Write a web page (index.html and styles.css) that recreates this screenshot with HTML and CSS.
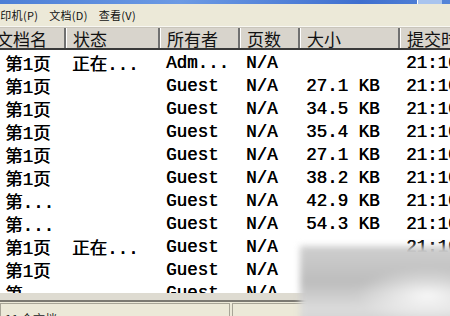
FILE: index.html
```html
<!DOCTYPE html>
<html>
<head>
<meta charset="utf-8">
<link rel="stylesheet" href="styles.css">
</head>
<body>
<div class="window">
  <div class="titlebar"><div class="tb-btns"></div></div>
  <div class="menubar">
    <span class="menu first">打印机(P)</span>
    <span class="menu">文档(D)</span>
    <span class="menu">查看(V)</span>
  </div>
  <div class="list">
    <div class="row header">
      <div class="hcell first">文档名</div>
      <div class="hcell">状态</div>
      <div class="hcell">所有者</div>
      <div class="hcell">页数</div>
      <div class="hcell">大小</div>
      <div class="hcell last">提交时间</div>
    </div>
    <div class="body">
      <div class="row"><div>第1页</div><div>正在...</div><div>Adm...</div><div>N/A</div><div></div><div>21:10</div></div>
      <div class="row"><div>第1页</div><div></div><div>Guest</div><div>N/A</div><div>27.1 KB</div><div>21:10</div></div>
      <div class="row"><div>第1页</div><div></div><div>Guest</div><div>N/A</div><div>34.5 KB</div><div>21:10</div></div>
      <div class="row"><div>第1页</div><div></div><div>Guest</div><div>N/A</div><div>35.4 KB</div><div>21:10</div></div>
      <div class="row"><div>第1页</div><div></div><div>Guest</div><div>N/A</div><div>27.1 KB</div><div>21:10</div></div>
      <div class="row"><div>第1页</div><div></div><div>Guest</div><div>N/A</div><div>38.2 KB</div><div>21:10</div></div>
      <div class="row"><div>第...</div><div></div><div>Guest</div><div>N/A</div><div>42.9 KB</div><div>21:10</div></div>
      <div class="row"><div>第...</div><div></div><div>Guest</div><div>N/A</div><div>54.3 KB</div><div>21:10</div></div>
      <div class="row"><div>第1页</div><div>正在...</div><div>Guest</div><div>N/A</div><div></div><div>21:10</div></div>
      <div class="row"><div>第1页</div><div></div><div>Guest</div><div>N/A</div><div></div><div>21:10</div></div>
      <div class="row"><div>第...</div><div></div><div>Guest</div><div>N/A</div><div></div><div>21:10</div></div>
    </div>
  </div>
  <div class="bottomband"></div>
  <div class="status">
    <div class="pane p1">11 个文档</div>
    <div class="pane p2"></div>
  </div>
  <div class="blur"></div>
</div>
</body>
</html>
```

FILE: styles.css
```css
html, body {
  margin: 0;
  padding: 0;
  background: #ffffff;
}
.window {
  position: relative;
  width: 450px;
  height: 316px;
  overflow: hidden;
  display: flex;
  flex-direction: column;
  background: #ece9d8;
  font-family: "Noto Sans CJK SC", sans-serif;
}
.titlebar {
  height: 4px;
  flex: none;
  background: linear-gradient(to right, #4d7fd6, #6c9ae4 40%, #3f6fcf 80%, #5585d8);
  position: relative;
}
.tb-btns {
  position: absolute;
  right: 8px;
  top: 0;
  width: 24px;
  height: 4px;
  background: #a9c4ee;
  border-left: 1px solid #ffffff;
}
.menubar {
  height: 22px;
  flex: none;
  display: flex;
  align-items: center;
  background: #ece9d8;
  border-bottom: 1px solid #f8f7f2;
  font-size: 11px;
  color: #111;
}
.menu {
  padding: 0 6px 0 5px;
  letter-spacing: 0.3px;
}
.menu.first {
  margin-left: -16px;
}
.list {
  flex: none;
  height: 266px;
  display: flex;
  flex-direction: column;
  background: #ffffff;
}
.row {
  display: grid;
  grid-template-columns: 66px 94px 80px 60px 100px 120px;
  height: 23px;
  align-items: center;
  font-family: "Liberation Mono", "Noto Sans CJK SC", monospace;
  font-size: 17.5px;
  color: #000;
  white-space: nowrap;
}
.row > div {
  padding-left: 6px;
  overflow: hidden;
}
.row > div:first-child {
  padding-left: 5px;
}
.header {
  height: 20px;
  flex: none;
  background: #d8d4cc;
  border-top: 1px solid #c9c5bb;
  border-bottom: 2px solid #3a3a3a;
  font-family: "Noto Sans CJK SC", sans-serif;
  font-size: 17px;
  align-items: stretch;
}
.hcell {
  display: flex;
  align-items: center;
  border-right: 2px solid #707070;
  box-shadow: inset 1px 0 #ffffff;
  line-height: 1;
  color: #111;
}
.row > .hcell.first {
  padding-left: 0;
  margin-left: -4px;
  box-shadow: none;
}
.row > .hcell {
  padding-left: 7px;
}
.hcell.last {
  border-right: none;
}
.body {
  flex: 1;
  overflow: hidden;
  padding-top: 1px;
}
.body .row {
  font-weight: normal;
  text-shadow: 0.6px 0 0 #000;
}
.bottomband {
  height: 7px;
  flex: none;
  background: #dedbd1;
  border-bottom: 2px solid #7c7a72;
}
.status {
  flex: 1;
  display: flex;
  background: #ece9d8;
  padding-top: 1px;
  overflow: hidden;
}
.pane {
  border: 1px solid #a8a597;
  border-bottom: none;
  font-size: 12px;
  line-height: 1;
  padding: 9px 4px 0;
  color: #222;
}
.p1 {
  width: 220px;
}
.p2 {
  flex: 1;
  margin-left: 2px;
}
.blur {
  position: absolute;
  left: 300px;
  top: 246px;
  width: 170px;
  height: 90px;
  background:
    radial-gradient(ellipse at 75% 55%, rgba(255,255,255,0.85), rgba(255,255,255,0) 40%),
    linear-gradient(to bottom, #cfcfcf, #bdbdbd 40%, #dcdcdc 70%, #c8c8c8);
  filter: blur(3px);
}
```
